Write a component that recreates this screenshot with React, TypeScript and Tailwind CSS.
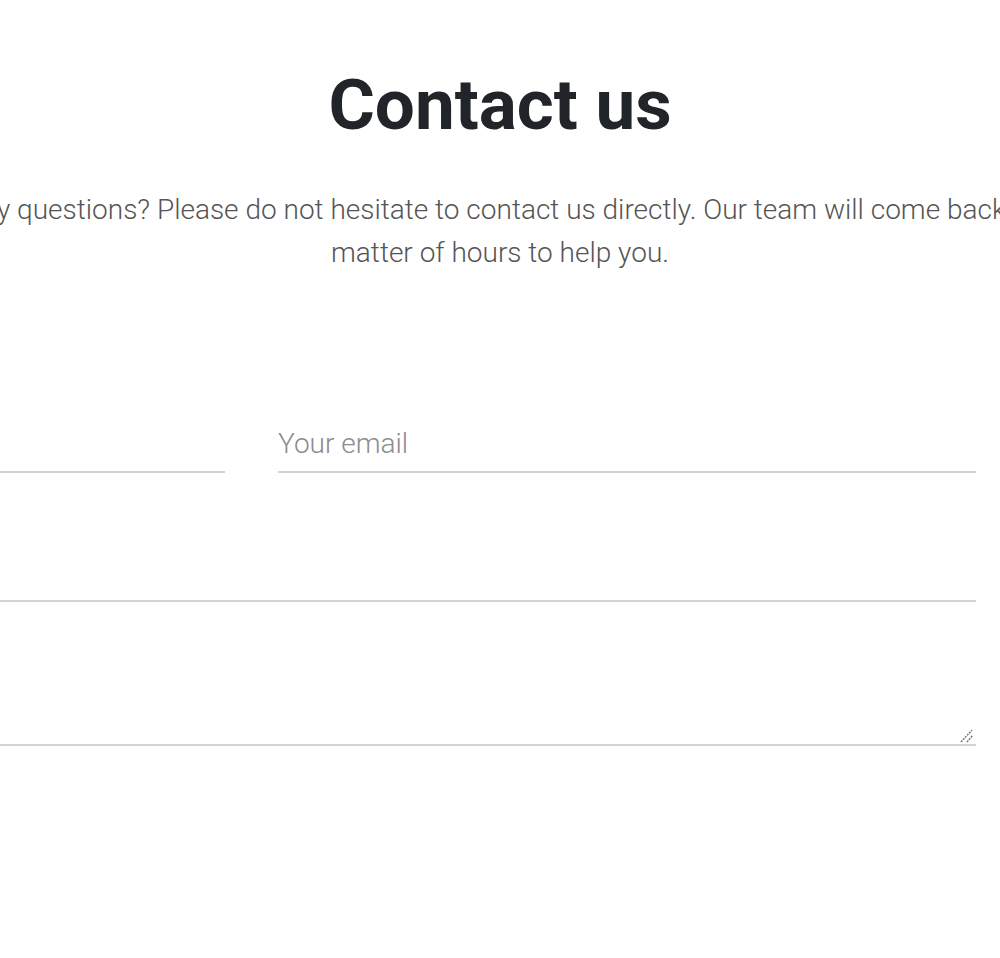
import React from "react";

export default function App() {
  return (
    <div
      className="w-full h-[958px] overflow-hidden bg-white"
      style={{ fontFamily: "Roboto, 'Noto Sans', sans-serif" }}
    >
      <h1 className="pt-[62px] text-center text-[71px] leading-[86px] font-bold text-[#212529]">
        Contact us
      </h1>
      <div className="mt-[40px] flex justify-center">
        <p className="whitespace-nowrap text-center text-[28px] leading-[43px] font-light text-[#555555]">
          Do you have any questions? Please do not hesitate to contact us directly. Our team will come back to you within a
          <br />
          matter of hours to help you.
        </p>
      </div>
      <form className="mt-[141px] pr-[24px] flex flex-col">
        <div className="grid grid-cols-[225px_1fr] gap-[53px]">
          <input
            type="text"
            aria-label="Your name"
            className="h-[58px] w-full border-b-2 border-[#d2d2d2] bg-transparent text-[28px] font-light text-[#555] outline-none"
          />
          <input
            type="email"
            placeholder="Your email"
            className="h-[58px] w-full border-b-2 border-[#d2d2d2] bg-transparent text-[28px] font-light text-[#555] outline-none placeholder:text-[#8c8c8c]"
          />
        </div>
        <input
          type="text"
          aria-label="Subject"
          className="mt-[71px] h-[58px] w-full border-b-2 border-[#d2d2d2] bg-transparent text-[28px] font-light text-[#555] outline-none"
        />
        <div className="relative mt-[70px]">
          <textarea
            aria-label="Your message"
            className="block h-[74px] w-full resize-none border-b-2 border-[#d2d2d2] bg-transparent text-[28px] font-light text-[#555] outline-none"
          />
          <svg
            className="absolute right-[2px] bottom-[3px]"
            width="16"
            height="16"
            viewBox="0 0 16 16"
            aria-hidden="true"
          >
            <line x1="3" y1="15" x2="14" y2="3" stroke="#707070" strokeWidth="1.4" strokeDasharray="2 1" />
            <line x1="9" y1="15" x2="15" y2="8" stroke="#707070" strokeWidth="1.4" strokeDasharray="2 1" />
          </svg>
        </div>
      </form>
    </div>
  );
}
